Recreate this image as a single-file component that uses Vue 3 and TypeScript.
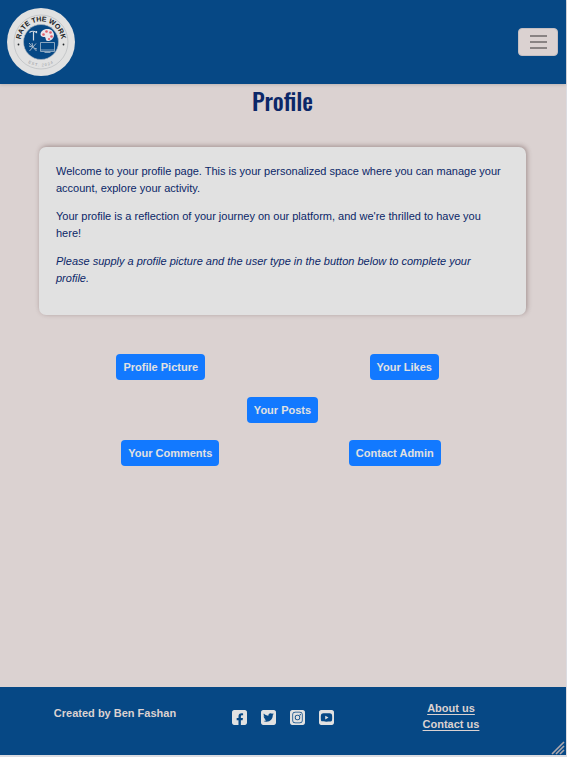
<script setup lang="ts">
import { ref } from 'vue'

interface Action {
  label: string
}

const actionRows: Action[][] = [
  [{ label: 'Profile Picture' }, { label: 'Your Likes' }],
  [{ label: 'Your Posts' }],
  [{ label: 'Your Comments' }, { label: 'Contact Admin' }],
]

const square =
  'M64 32C28.700 32 0 60.700 0 96v320c0 35.300 28.700 64 64 64h320c35.300 0 64-28.700 64-64V96c0-35.300-28.700-64-64-64H64z'

const socials = [
  {
    name: 'Facebook',
    mark: 'M194 480V338h-54v-64h54v-46c0-67 30-97 95-97 12 0 34 2 42 5v56c-5-1-12-1-22-1-32 0-44 12-44 43v40h62l-11 64h-51v142z',
  },
  {
    name: 'Twitter',
    mark: 'M351.300 199.300c0 86.700-66 186.600-186.600 186.600-37.200 0-71.700-10.800-100.700-29.400 5.300.6 10.400.8 15.800.8 30.700 0 58.900-10.400 81.400-28-28.800-.6-53-19.500-61.300-45.500 10.100 1.500 19.200 1.500 29.600-1.200-30-6.100-52.500-32.500-52.500-64.400v-.8c8.700 4.900 18.900 7.900 29.600 8.300-18.300-12.200-29.200-32.700-29.200-54.600 0-12.200 3.200-23.400 8.900-33.100 32.300 39.800 80.800 65.800 135.200 68.600-9.300-44.500 24-80.600 64-80.600 18.900 0 35.900 7.900 47.900 20.700 14.800-2.800 29-8.300 41.600-15.800-4.900 15.200-15.200 28-28.800 36.100 13.200-1.400 26-5.100 37.800-10.200-8.900 13.100-20.100 24.700-32.900 34 .2 2.800.2 5.700.2 8.500z',
  },
  {
    name: 'Instagram',
    mark: 'M157 86h134c55 0 87 32 87 87v166c0 55-32 87-87 87H157c-55 0-87-32-87-87V173c0-55 32-87 87-87zm3 22c-44 0-67 23-67 67v162c0 44 23 67 67 67h128c44 0 67-23 67-67V175c0-44-23-67-67-67zM224 174a82 82 0 1 1 0 164 82 82 0 0 1 0-164zm0 25a57 57 0 1 0 0 114 57 57 0 0 0 0-114zM308 151a20 20 0 1 1 0 40 20 20 0 0 1 0-40z',
  },
  {
    name: 'YouTube',
    mark: 'M224 132c75 0 122 2 142 9 22 8 28 45 28 115s-6 107-28 115c-20 7-67 9-142 9s-122-2-142-9c-22-8-28-45-28-115s6-107 28-115c20-7 67-9 142-9zm-38 68v112l98-56z',
  },
]

const menuOpen = ref(false)
</script>

<template>
  <div class="page">
    <header class="navbar">
      <a class="brand" href="#" aria-label="Rate The Work">
        <svg class="logo" viewBox="0 0 68 68" aria-hidden="true">
          <defs>
            <path id="arc-top" d="M13.500 34a20.500 20.500 0 0 1 41 0" />
            <path id="arc-bottom" d="M9.500 34a24.500 24.500 0 0 0 49 0" />
          </defs>
          <circle cx="34" cy="34" r="34" fill="#e1e1e1" />
          <circle cx="34" cy="34" r="27" fill="none" stroke="#b9bcbf" stroke-width="0.700" />
          <circle cx="34" cy="34" r="17.500" fill="#064885" stroke="#b4bbc2" stroke-width="0.600" />
          <text class="logo-name" text-anchor="middle">
            <textPath href="#arc-top" startOffset="50%">RATE THE WORK</textPath>
          </text>
          <text class="logo-date" text-anchor="middle">
            <textPath href="#arc-bottom" startOffset="50%">EST. 2024</textPath>
          </text>
          <circle cx="11.500" cy="36.500" r="0.900" fill="#202428" />
          <circle cx="56.500" cy="36.500" r="0.900" fill="#202428" />
          <path d="M22.500 24.500q3-2.500 7 0v-1.500M26.500 23v9.500" fill="none" stroke="#d4dbe3" stroke-width="1.200" />
          <path
            d="M40.500 21c-4.500 0-7 2.500-7 5.500 0 2 2 2.500 4.200 2.500 1.500 0 .3 4 3 4 3.600 0 6.300-2.700 6.300-6s-2.500-6-6.500-6z"
            fill="#e8e4ea"
          />
          <g fill="#e25f6c">
            <circle cx="36.500" cy="26.500" r="1.300" />
            <circle cx="39.500" cy="23.500" r="1.300" />
            <circle cx="43.500" cy="24.500" r="1.300" />
            <circle cx="44.500" cy="28.500" r="1.300" />
            <circle cx="42" cy="31" r="1.100" />
          </g>
          <path
            d="M22 35l7.500 8M29 35.500L22.500 43M22 38l3 1M27 40l3 1M25 35l1 4"
            fill="none"
            stroke="#b1bfce"
            stroke-width="0.900"
          />
          <path
            d="M33.500 34.500h14v9h-14zM33.500 42h14M37.500 44.500h6"
            fill="none"
            stroke="#aabccd"
            stroke-width="0.800"
          />
        </svg>
      </a>
      <button
        class="toggler"
        type="button"
        aria-label="Toggle navigation"
        :aria-expanded="menuOpen"
        @click="menuOpen = !menuOpen"
      >
        <svg viewBox="0 0 20 16" aria-hidden="true">
          <path d="M2 2h17M2 8h17M2 14h17" />
        </svg>
      </button>
    </header>

    <main class="content">
      <h1>Profile</h1>
      <section class="card">
        <p>
          Welcome to your profile page. This is your personalized space where you can manage your
          account, explore your activity.
        </p>
        <p>
          Your profile is a reflection of your journey on our platform, and we're thrilled to have you
          here!
        </p>
        <p>
          <em>
            Please supply a profile picture and the user type in the button below to complete your
            profile.
          </em>
        </p>
      </section>
      <div class="actions">
        <div v-for="(row, index) in actionRows" :key="index" class="row" :class="{ inset: index === 2 }">
          <div v-for="action in row" :key="action.label" class="cell">
            <button class="btn" type="button">{{ action.label }}</button>
          </div>
        </div>
      </div>
    </main>

    <footer class="footer">
      <p class="credit">Created by Ben Fashan</p>
      <nav class="socials" aria-label="Social media">
        <a v-for="social in socials" :key="social.name" href="#" :aria-label="social.name">
          <svg viewBox="0 32 448 448" aria-hidden="true">
            <path :d="square" fill="#e1e1e1" />
            <path :d="social.mark" fill="#064885" fill-rule="evenodd" />
          </svg>
        </a>
      </nav>
      <nav class="links" aria-label="Site">
        <a href="#">About us</a>
        <a href="#">Contact us</a>
      </nav>
      <svg class="grip" viewBox="0 0 14 14" aria-hidden="true">
        <path d="M1 13L13 1M5 13l8-8M9 13l4-4" />
      </svg>
    </footer>
  </div>
</template>

<style>
body {
  margin: 0;
  background: #dcdce1;
}
</style>

<style scoped>
.page {
  box-sizing: border-box;
  display: flex;
  flex-direction: column;
  min-height: 100vh;
  padding: 0 1px 2px 0;
  color: #0b2768;
  font-family: 'Liberation Sans', Arial, sans-serif;
  font-size: 11px;
  line-height: 17px;
}

.navbar {
  position: relative;
  display: flex;
  align-items: center;
  justify-content: space-between;
  padding: 8px 8px 8px 7px;
  background: #064885;
  box-shadow: 0 1px 3px rgba(0, 0, 0, 0.15);
}

.brand,
.logo {
  display: block;
}

.logo {
  width: 68px;
  height: 68px;
}

.logo-name {
  fill: #17191c;
  font-size: 7px;
  font-weight: 700;
}

.logo-date {
  fill: #92969a;
  font-size: 4px;
  letter-spacing: 1px;
}

.toggler {
  display: flex;
  align-items: center;
  justify-content: center;
  width: 40px;
  height: 28px;
  padding: 0;
  border: 1px solid #c5bfc2;
  border-radius: 4px;
  background: #dbd2d1;
}

.toggler svg {
  width: 20px;
  height: 16px;
}

.toggler path {
  fill: none;
  stroke: #6f6a6a;
  stroke-width: 1.4;
}

.content {
  flex: 1;
  padding: 0 40px 24px 39px;
  background: #dbd2d1;
}

h1 {
  margin: 0;
  font-family: Oswald, 'Liberation Sans Narrow', 'DejaVu Sans Condensed', sans-serif;
  font-size: 24px;
  font-weight: 500;
  line-height: 32px;
  text-align: center;
}

.card {
  margin-top: 31px;
  padding: 16px 22px 17px 17px;
  border-radius: 7px;
  background: #e1e1e1;
  box-shadow: 1px -1px 5px rgba(70, 40, 40, 0.4);
}

.card p {
  margin: 0 0 11px;
}

.actions {
  display: grid;
  gap: 17px;
  margin-top: 39px;
}

.row {
  display: flex;
}

.inset {
  padding: 0 19px;
}

.cell {
  display: flex;
  flex: 1;
  justify-content: center;
}

.btn {
  padding: 5px 7px;
  border: 0;
  border-radius: 4px;
  background: #1279ff;
  color: #e1e1e1;
  font: inherit;
  font-weight: 700;
  line-height: 16px;
}

.footer {
  position: relative;
  display: grid;
  grid-template-columns: repeat(3, 1fr);
  min-height: 68px;
  padding: 0 31px;
  background: #064885;
  color: #dbd2d1;
  font-weight: 700;
  box-sizing: border-box;
}

.credit {
  margin: 18px 0 0;
  text-align: center;
}

.socials {
  display: flex;
  justify-content: center;
  gap: 14px;
  padding-top: 23px;
}

.socials svg {
  display: block;
  width: 15px;
  height: 15px;
}

.links {
  display: flex;
  flex-direction: column;
  align-items: center;
  padding-top: 13px;
  line-height: 16px;
}

.links a {
  color: #dbd2d1;
  text-underline-offset: 2px;
}

.grip {
  position: absolute;
  right: 1px;
  bottom: 0;
  width: 14px;
  height: 14px;
}

.grip path {
  fill: none;
  stroke: #aca8ae;
  stroke-width: 1.6;
}
</style>
